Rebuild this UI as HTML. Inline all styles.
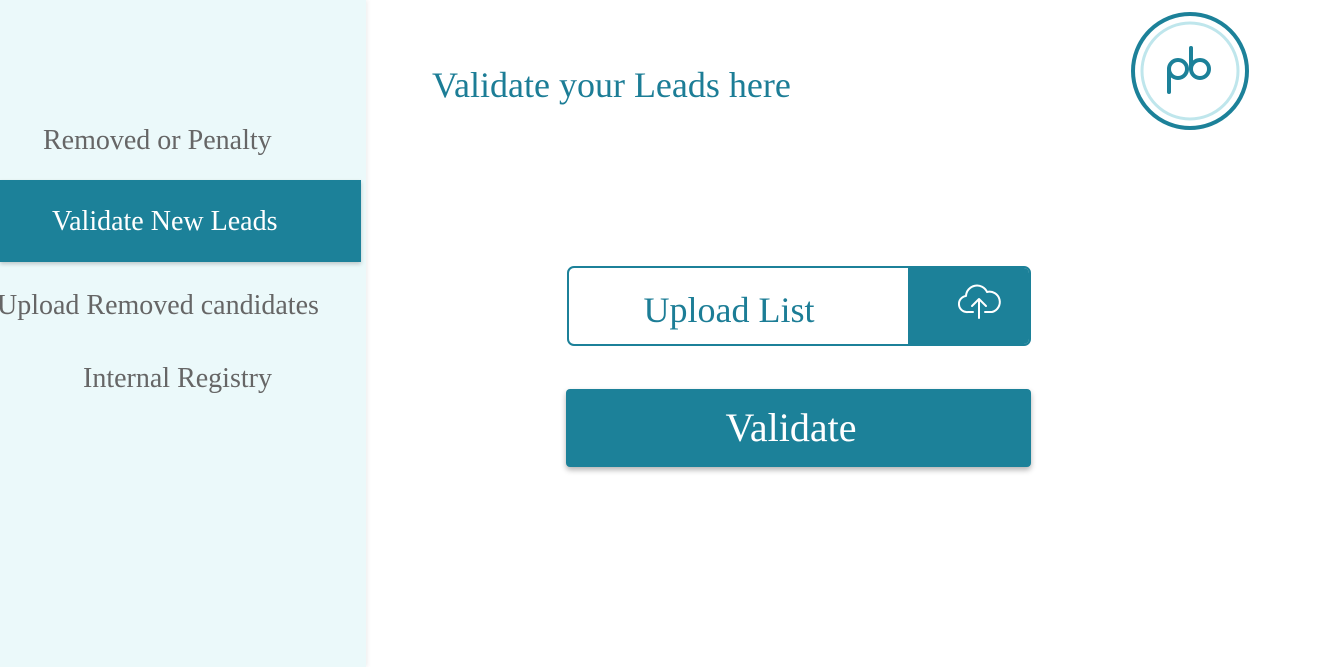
<!DOCTYPE html>
<html><head><style>
body{margin:0;width:1329px;height:667px;background:#fff;font-family:"Liberation Serif",serif;position:relative;overflow:hidden}
.side{position:absolute;left:0;top:0;width:366px;height:667px;background:#ebf9fa;box-shadow:2px 0 4px rgba(0,0,0,0.06)}
.it{position:absolute;font-size:28px;color:#666;white-space:nowrap}
.act{position:absolute;left:0;top:180px;width:361px;height:82px;background:#1c8199;box-shadow:0 2px 4px rgba(0,0,0,0.2)}
.t{position:absolute;left:432px;top:64px;font-size:36px;color:#1c7d96}
.up{position:absolute;left:567px;top:266px;width:460px;height:76px;border:2px solid #1c8199;border-radius:7px;overflow:hidden}
.up .l{position:absolute;left:0;top:0;width:320px;height:76px;text-align:center;line-height:84px;font-size:36px;color:#1c7d96}
.up .r{position:absolute;left:339px;top:0;width:123px;height:76px;background:#1c8199}
.val{position:absolute;left:566px;top:389px;width:450px;padding-right:15px;height:78px;background:#1c8199;border-radius:4px;box-shadow:0 3px 6px rgba(0,0,0,0.3);color:#fff;font-size:40px;text-align:center;line-height:78px}
</style></head><body>
<div class="side">
<div class="it" style="left:43px;top:125px">Removed or Penalty</div>
<div class="act"></div>
<div class="it" style="left:52px;top:206px;color:#fff">Validate New Leads</div>
<div class="it" style="left:-3px;top:290px">Upload Removed candidates</div>
<div class="it" style="left:83px;top:363px">Internal Registry</div>
</div>
<div class="t">Validate your Leads here</div>
<svg style="position:absolute;left:1128px;top:9px" width="124" height="124" viewBox="0 0 124 124">
<circle cx="62" cy="62" r="57" fill="none" stroke="#1c8199" stroke-width="4"/>
<circle cx="62" cy="62" r="48" fill="none" stroke="#bfe6ec" stroke-width="3"/>
<circle cx="50" cy="60" r="9" fill="none" stroke="#1c8199" stroke-width="4"/>
<path d="M41 60 V83" fill="none" stroke="#1c8199" stroke-width="4" stroke-linecap="round"/>
<circle cx="72" cy="60" r="9" fill="none" stroke="#1c8199" stroke-width="4"/>
<path d="M63 60 V39" fill="none" stroke="#1c8199" stroke-width="4" stroke-linecap="round"/>
</svg>
<div class="up"><div class="l">Upload List</div><div class="r">
<svg style="position:absolute;left:48px;top:14px" width="48" height="42" viewBox="0 0 48 42">
<path d="M17 30 H12 A8 8 0 0 1 10 14 A11 11 0 0 1 31 10 A9 9 0 0 1 36 30 H29" fill="none" stroke="#fff" stroke-width="2" stroke-linecap="round" stroke-linejoin="round"/>
<path d="M23 36 V18 M16 24 L23 17 L30 24" fill="none" stroke="#fff" stroke-width="2" stroke-linecap="round" stroke-linejoin="round"/>
</svg></div></div>
<div class="val">Validate</div>
</body></html>
